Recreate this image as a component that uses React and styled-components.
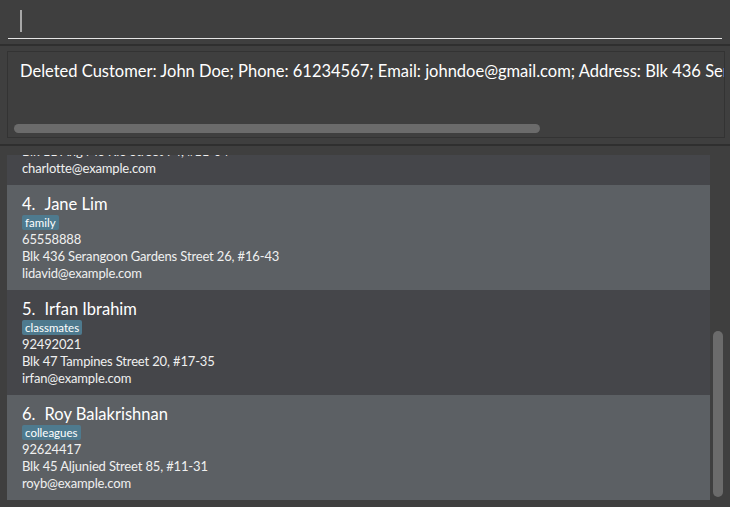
import React, { useLayoutEffect, useRef } from "react";
import styled, { createGlobalStyle } from "styled-components";

const GlobalStyle = createGlobalStyle`
  html, body {
    margin: 0;
    padding: 0;
    background: #3f3f3f;
    font-family: Lato, "Open Sans", "Liberation Sans", sans-serif;
    color: #ffffff;
    overflow: hidden;
  }
`;

const Window = styled.div`
  width: 730px;
  height: 507px;
  display: flex;
  flex-direction: column;
  background: #3f3f3f;
`;

const CommandPane = styled.div`
  padding: 0 8px;
  height: 46px;
  box-sizing: border-box;
  border-bottom: 2px solid #2f2f2f;
`;

const CommandInput = styled.div`
  height: 39px;
  box-sizing: border-box;
  border-bottom: 1px solid #e4e4e4;
  padding: 10px 0 0 12px;
`;

const Caret = styled.div`
  width: 2px;
  height: 22px;
  background: #a8a8a8;
`;

const ResultPane = styled.div`
  padding: 5px 5px 6px 7px;
  border-bottom: 2px solid #2f2f2f;
`;

const ResultBox = styled.div`
  height: 87px;
  box-sizing: border-box;
  border: 1px solid #333333;
  display: flex;
  flex-direction: column;
  overflow: hidden;
`;

const ResultText = styled.div`
  padding: 9px 0 0 12px;
  font-size: 16.5px;
  white-space: nowrap;
  flex: 1;
  overflow: hidden;
`;

const HScroll = styled.div`
  height: 9px;
  width: 526px;
  margin: 0 0 4px 6px;
  border-radius: 5px;
  background: #6b6b6b;
`;

const ListPane = styled.div`
  flex: 1;
  display: flex;
  padding: 9px 4px 7px 7px;
  min-height: 0;
`;

const ListView = styled.div`
  flex: 1;
  overflow: hidden;
`;

const Card = styled.div`
  height: 105px;
  box-sizing: border-box;
  padding: 9px 15px 0 15px;
  background: ${(p) => (p.$odd ? "#5c6064" : "#45464a")};
  display: flex;
  flex-direction: column;
`;

const Name = styled.div`
  font-size: 16.5px;
  line-height: 21px;
  display: flex;
  gap: 9px;
`;

const Tags = styled.div`
  display: flex;
  gap: 4px;
  margin: 0 0 1px 0;
`;

const Tag = styled.span`
  background: #4e7a8e;
  font-size: 11.5px;
  line-height: 15px;
  padding: 0 3px;
  border-radius: 2px;
`;

const Field = styled.div`
  font-size: 13px;
  letter-spacing: -0.15px;
  line-height: 17px;
  color: #f0f0f0;
`;

const VTrack = styled.div`
  width: 16px;
  display: flex;
  flex-direction: column;
  align-items: center;
`;

const VThumb = styled.div`
  width: 10px;
  height: 166px;
  margin-top: auto;
  margin-bottom: 3px;
  border-radius: 5px;
  background: #6b6b6b;
`;

const persons = [
  { name: "Alex Yeoh", tag: "friends", phone: "87438807", address: "Blk 30 Geylang Street 29, #06-40", email: "alexyeoh@example.com" },
  { name: "Bernice Yu", tag: "colleagues", phone: "99272758", address: "Blk 30 Lorong 3 Serangoon Gardens, #07-18", email: "berniceyu@example.com" },
  { name: "Charlotte Oliveiro", tag: "neighbours", phone: "93210283", address: "Blk 11 Ang Mo Kio Street 74, #11-04", email: "charlotte@example.com" },
  { name: "Jane Lim", tag: "family", phone: "65558888", address: "Blk 436 Serangoon Gardens Street 26, #16-43", email: "lidavid@example.com" },
  { name: "Irfan Ibrahim", tag: "classmates", phone: "92492021", address: "Blk 47 Tampines Street 20, #17-35", email: "irfan@example.com" },
  { name: "Roy Balakrishnan", tag: "colleagues", phone: "92624417", address: "Blk 45 Aljunied Street 85, #11-31", email: "royb@example.com" },
];

function PersonCard({ index, person }) {
  return (
    <Card $odd={index % 2 === 1}>
      <Name>
        <span>{index + 1}.</span>
        <span>{person.name}</span>
      </Name>
      <Tags>
        <Tag>{person.tag}</Tag>
      </Tags>
      <Field>{person.phone}</Field>
      <Field>{person.address}</Field>
      <Field>{person.email}</Field>
    </Card>
  );
}

export default function App() {
  const listRef = useRef(null);
  useLayoutEffect(() => {
    if (listRef.current) listRef.current.scrollTop = 285;
  }, []);

  return (
    <Window>
      <GlobalStyle />
      <CommandPane>
        <CommandInput>
          <Caret />
        </CommandInput>
      </CommandPane>
      <ResultPane>
        <ResultBox>
          <ResultText>
            Deleted Customer: John Doe; Phone: 61234567; Email: johndoe@gmail.com; Address: Blk 436 Serangoon Gardens Street 26, #16-43; Tags: [friends]
          </ResultText>
          <HScroll />
        </ResultBox>
      </ResultPane>
      <ListPane>
        <ListView ref={listRef}>
          {persons.map((p, i) => (
            <PersonCard key={p.name} index={i} person={p} />
          ))}
        </ListView>
        <VTrack>
          <VThumb />
        </VTrack>
      </ListPane>
    </Window>
  );
}
